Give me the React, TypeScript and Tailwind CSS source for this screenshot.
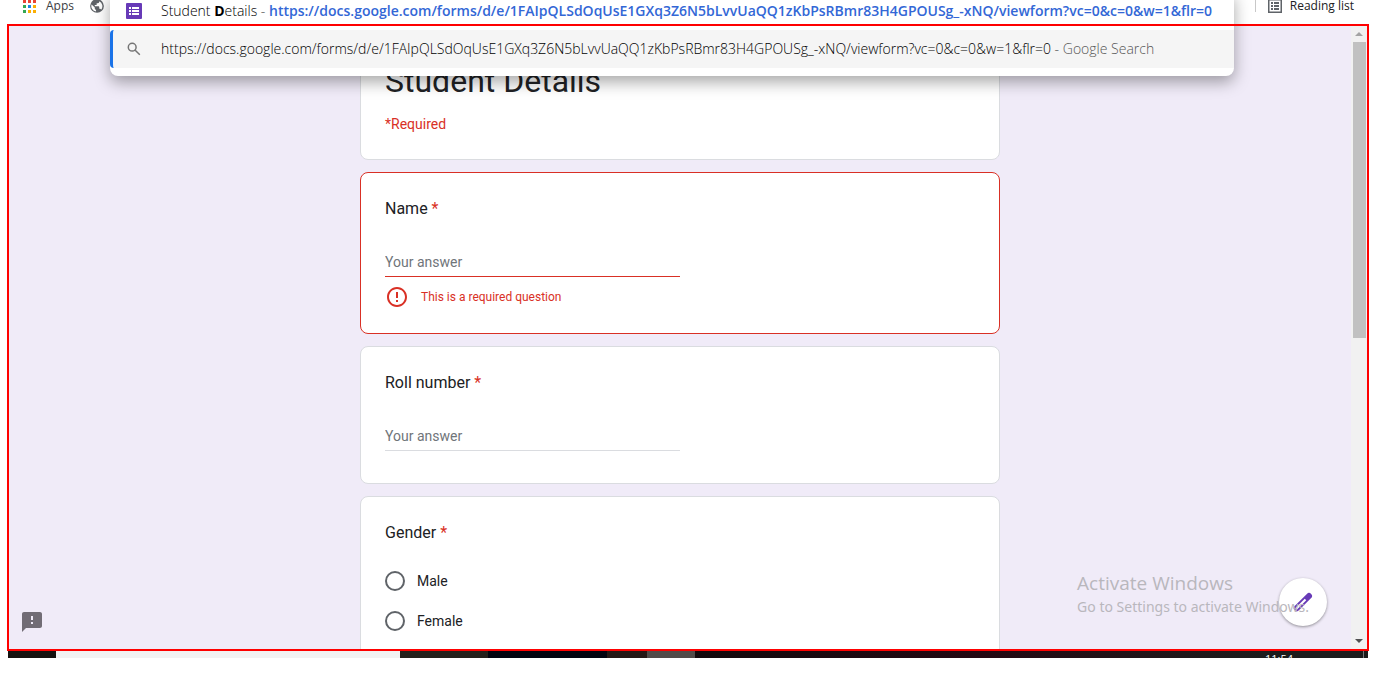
import React from "react";

const url =
  "https://docs.google.com/forms/d/e/1FAIpQLSdOqUsE1GXq3Z6N5bLvvUaQQ1zKbPsRBmr83H4GPOUSg_-xNQ/viewform?vc=0&c=0&w=1&flr=0";

const appDots = ["#ea4335", "#ea4335", "#ea4335", "#34a853", "#1a86e8", "#fbaf04", "#34a853", "#fbaf04", "#fbaf04"];

function AppsIcon() {
  return (
    <svg width="13" height="13" viewBox="0 0 13 13" aria-hidden="true">
      {appDots.map((c, i) => (
        <rect key={i} x={(i % 3) * 5} y={Math.floor(i / 3) * 5} width="3" height="3" fill={c} />
      ))}
    </svg>
  );
}

function GlobeIcon() {
  return (
    <svg width="14" height="14" viewBox="1 1 22 22" aria-hidden="true">
      <circle cx="12" cy="12" r="10.800" fill="#5f6368" />
      <path
        fill="#fff"
        d="M3.500 9.500l5 5v1.500a2 2 0 0 0 2 2v2.800A8.800 8.800 0 0 1 3.500 9.500zM18.500 18a2.200 2.200 0 0 0-2-1.500h-1v-3a1 1 0 0 0-1-1h-6v-2h2a1 1 0 0 0 1-1v-2h2a2 2 0 0 0 2-2v-1a8.800 8.800 0 0 1 3 13.500z"
      />
    </svg>
  );
}

function Bookmarks() {
  return (
    <header className="flex h-6 shrink-0 items-start justify-between overflow-hidden pr-[22px] pl-[23px] font-['Open_Sans',sans-serif] text-xs leading-3 text-[#3c4043]">
      <nav className="flex h-3 items-center gap-4">
        <a href="#apps" className="flex items-center gap-2.5">
          <AppsIcon />
          Apps
        </a>
        <a href="#site" aria-label="Bookmark">
          <GlobeIcon />
        </a>
      </nav>
      <div className="flex h-3 items-center gap-3">
        <span className="h-3 w-px bg-[#c8c8c8]" />
        <button className="flex items-center gap-2 text-[#202124]">
          <svg width="14" height="14" viewBox="0 0 14 14" aria-hidden="true">
            <path
              fill="#5f6368"
              d="M0 0h14v14H0zM1.500 1.500v11h11v-11zM3 3h2v2H3zM6 3h5v2H6zM3 6h2v2H3zM6 6h5v2H6zM3 9h2v2H3zM6 9h5v2H6z"
              fillRule="evenodd"
            />
          </svg>
          Reading list
        </button>
      </div>
    </header>
  );
}

function Suggestions() {
  return (
    <ul className="absolute -top-2 right-[142px] left-[110px] z-10 overflow-hidden rounded-b-lg bg-white pb-2 font-['Open_Sans',sans-serif] text-sm font-light whitespace-nowrap text-black shadow-[0_6px_16px_rgba(0,0,0,0.35)]">
      <li className="flex h-[38px] items-center gap-[19px] pl-4">
        <svg width="16" height="16" viewBox="0 0 16 16" className="shrink-0" aria-hidden="true">
          <rect width="16" height="16" rx="1" fill="#673ab7" />
          <path fill="#fff" d="M3 4h2v2H3zM6 4h7v2H6zM3 7h2v2H3zM6 7h7v2H6zM3 10h2v2H3zM6 10h7v2H6z" />
        </svg>
        <span>
          Student <b className="font-bold">D</b>etails <span className="text-[#555555]">-</span>{" "}
          <b className="font-semibold text-[#3367d6]">{url}</b>
        </span>
      </li>
      <li className="flex h-[38px] items-center gap-[19px] rounded-l-sm border-l-[3px] border-[#1a73e8] bg-[#f5f5f5] pl-[13px]">
        <svg width="16" height="16" viewBox="0 0 16 16" className="shrink-0" aria-hidden="true">
          <g fill="none" stroke="#757575" strokeWidth="1.500">
            <circle cx="6.200" cy="6.200" r="3.900" />
            <path d="M9.200 9.200l4.600 4.600" />
          </g>
        </svg>
        <span>
          {url} <span className="text-[#555555]">- Google Search</span>
        </span>
      </li>
    </ul>
  );
}

function Card({ invalid, children }: { invalid?: boolean; children: React.ReactNode }) {
  return (
    <section className={`rounded-lg border bg-white px-6 pt-6 ${invalid ? "border-[#d93025] pb-6" : "border-[#dadce0] pb-8"}`}>
      {children}
    </section>
  );
}

function TextQuestion({ id, label, error }: { id: string; label: string; error?: string }) {
  return (
    <Card invalid={!!error}>
      <label htmlFor={id} className="block text-base leading-6">
        {label} <span className="text-[#d93025]">*</span>
      </label>
      <div className={`mt-7 h-7 w-1/2 border-b ${error ? "border-b-[#d93025]" : "border-b-[#dadce0]"}`}>
        <input
          id={id}
          placeholder="Your answer"
          className="block h-[26px] w-full text-sm outline-none placeholder:text-[#70757a]"
        />
      </div>
      {error && (
        <p className="mt-2 flex items-center gap-3 text-xs leading-6 text-[#d93025]">
          <svg width="24" height="24" viewBox="0 0 24 24" aria-hidden="true">
            <path
              fill="#d93025"
              d="M11 15h2v2h-2zm0-8h2v6h-2zm.99-5C6.470 2 2 6.480 2 12s4.470 10 9.990 10C17.520 22 22 17.520 22 12S17.520 2 11.990 2zM12 20c-4.420 0-8-3.580-8-8s3.580-8 8-8 8 3.580 8 8-3.580 8-8 8z"
            />
          </svg>
          {error}
        </p>
      )}
    </Card>
  );
}

function Scrollbar() {
  return (
    <div className="flex w-4 shrink-0 flex-col items-center bg-[#f1f1f1]" aria-hidden="true">
      <svg width="16" height="16" viewBox="0 0 16 16">
        <path fill="#a3a3a3" d="M4 10l4-4 4 4z" />
      </svg>
      <div className="min-h-0 w-[13px] flex-1">
        <div className="h-1/2 w-full bg-[#c1c1c1]" />
      </div>
      <svg width="16" height="16" viewBox="0 0 16 16">
        <path fill="#505050" d="M4 6l4 4 4-4z" />
      </svg>
    </div>
  );
}

export default function App() {
  return (
    <div className="relative flex h-screen flex-col overflow-hidden bg-white pb-[17px]">
      <Bookmarks />
      <Suggestions />
      <main className="relative mx-[7px] flex min-h-0 flex-1 p-0.5 font-[Roboto,sans-serif] text-[#202124]">
        <div className="relative min-w-0 flex-1 overflow-hidden bg-[#f0ebf8]">
          <form className="mx-auto flex max-w-[640px] flex-col gap-3">
            <section className="rounded-lg border border-[#dadce0] bg-white px-6 pt-[34px] pb-[25px]">
              <h1 className="text-[32px] leading-10">Student Details</h1>
              <p className="mt-[13px] text-sm text-[#d93025]">*Required</p>
            </section>
            <TextQuestion id="name" label="Name" error="This is a required question" />
            <TextQuestion id="roll" label="Roll number" />
            <Card>
              <fieldset>
                <legend className="text-base leading-6">
                  Gender <span className="text-[#d93025]">*</span>
                </legend>
                <div className="mt-4 text-sm">
                  {["Male", "Female"].map((g) => (
                    <label key={g} className="flex h-10 items-center gap-3">
                      <input
                        type="radio"
                        name="gender"
                        className="size-5 appearance-none rounded-full border-2 border-[#5f6368] checked:border-[6px]"
                      />
                      {g}
                    </label>
                  ))}
                </div>
              </fieldset>
            </Card>
          </form>
          <button aria-label="Report a problem" className="absolute bottom-[15px] left-[11px]">
            <svg width="24" height="24" viewBox="0 0 24 24" aria-hidden="true">
              <path
                fill="#716c75"
                d="M20 2H4c-1.100 0-1.990.9-1.990 2L2 22l4-4h14c1.100 0 2-.9 2-2V4c0-1.100-.9-2-2-2zm-7 12h-2v-2h2v2zm0-4h-2V6h2v4z"
              />
            </svg>
          </button>
          <button
            aria-label="Edit this form"
            className="absolute right-6 bottom-[23px] flex size-12 items-center justify-center rounded-full bg-white shadow-[0_1px_3px_rgba(0,0,0,0.4)]"
          >
            <svg width="24" height="24" viewBox="0 0 24 24" aria-hidden="true">
              <path stroke="#673ab7" strokeWidth="6" strokeLinecap="round" d="M5.800 18.200L18 6" />
              <path stroke="#fff" strokeWidth="2.200" d="M5 19L14.500 9.500" />
            </svg>
          </button>
        </div>
        <Scrollbar />
        <div className="pointer-events-none absolute right-[60px] bottom-[34px] font-['Noto_Sans',sans-serif] text-[#b9b7bd]">
          <p className="font-['Open_Sans',sans-serif] text-[19px] leading-7">Activate Windows</p>
          <p className="text-sm leading-5">Go to Settings to activate Windows.</p>
        </div>
      </main>
      <div className="pointer-events-none absolute inset-x-[7px] top-6 bottom-6 z-20 border-2 border-[#ff0000]" />
      <footer className="mx-2 flex h-[7px] shrink-0 overflow-hidden bg-[#1c1c1c] font-['Open_Sans',sans-serif]">
        <div className="w-12 bg-[#15120f]" />
        <div className="w-[344px] bg-[#f2f2f2]" />
        <div className="w-[88px] bg-[#23201b]" />
        <div className="w-[119px] bg-[#02040f]" />
        <div className="w-[40px] bg-[#241815]" />
        <div className="w-[48px] bg-[#514b49]" />
        <div className="flex-1 bg-linear-to-r from-[#12090c] via-[#230812] to-[#1c1c1c]" />
        <div className="w-[98px] pt-0.5 text-[11px] leading-3 text-white">11:54</div>
        <div className="mr-1 w-px bg-[#777777]" />
      </footer>
    </div>
  );
}
